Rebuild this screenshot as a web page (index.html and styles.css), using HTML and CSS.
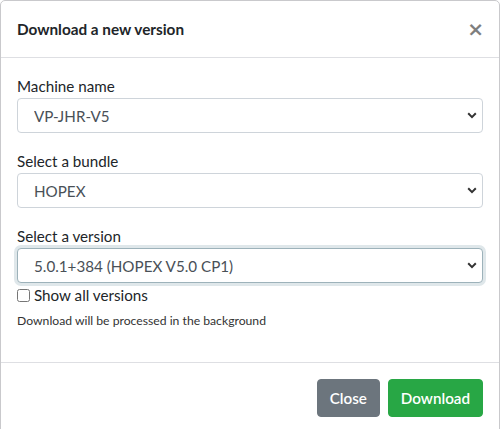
FILE: index.html
```html
<!DOCTYPE html>
<html lang="en">
<head>
<meta charset="utf-8">
<title>Download a new version</title>
<link rel="stylesheet" href="styles.css">
</head>
<body>
<div class="modal">
  <div class="modal-header">
    <h5 class="modal-title">Download a new version</h5>
    <button type="button" class="close" aria-label="Close">×</button>
  </div>
  <div class="modal-body">
    <div class="form-group">
      <label class="label">Machine name</label>
      <select class="select"><option>VP-JHR-V5</option></select>
    </div>
    <div class="form-group">
      <label class="label">Select a bundle</label>
      <select class="select"><option>HOPEX</option></select>
    </div>
    <div class="form-group form-group-last">
      <label class="label">Select a version</label>
      <select class="select select-focus"><option>5.0.1+384 (HOPEX V5.0 CP1)</option></select>
      <label class="check"><input type="checkbox" class="checkbox">Show all versions</label>
      <small class="hint">Download will be processed in the background</small>
    </div>
  </div>
  <div class="modal-footer">
    <button type="button" class="btn btn-secondary">Close</button>
    <button type="button" class="btn btn-success">Download</button>
  </div>
</div>
</body>
</html>
```
FILE: styles.css
```css
html, body {
  margin: 0;
  padding: 0;
  background: #ffffff;
}
body {
  width: 500px;
  height: 429px;
  overflow: hidden;
  font-family: Lato, "Liberation Sans", sans-serif;
  font-size: 15.2px;
  line-height: 24px;
  color: #212529;
}
.modal {
  box-sizing: border-box;
  width: 500px;
  height: 440px;
  border: 1px solid #c9c9cc;
  border-radius: 5px;
  background: #fff;
}
.modal-header {
  box-sizing: border-box;
  height: 57px;
  display: flex;
  align-items: center;
  justify-content: space-between;
  padding: 0 16px;
  border-bottom: 1px solid #dedfe3;
}
.modal-title {
  margin: 0;
  font-size: 15.3px;
  font-weight: 700;
  line-height: 24px;
  color: #212529;
}
.close {
  border: 0;
  background: transparent;
  padding: 0;
  margin: 0 -1px 0 0;
  font-family: "DejaVu Sans", sans-serif;
  font-size: 20px;
  font-weight: 700;
  line-height: 24px;
  color: #000;
  opacity: .5;
}
.modal-body {
  padding: 16px;
}
.form-group {
  display: flex;
  flex-direction: column;
  margin-bottom: 16px;
}
.label {
  display: block;
  line-height: 24px;
}
.select {
  box-sizing: border-box;
  width: 100%;
  height: 35px;
  margin: 0;
  padding: 0 28px 0 16px;
  -webkit-appearance: none;
  appearance: none;
  font-family: Lato, "Liberation Sans", sans-serif;
  font-size: 15.2px;
  color: #495057;
  background-color: #fff;
  background-image: url("data:image/svg+xml,%3Csvg xmlns='http://www.w3.org/2000/svg' width='10' height='7' viewBox='0 0 10 7'%3E%3Cpath d='M1.2 1.3L5 5.1l3.8-3.8' fill='none' stroke='%23333' stroke-width='2'/%3E%3C/svg%3E");
  background-repeat: no-repeat;
  background-position: right 5px center;
  background-size: 10px 7px;
  border: 1px solid #ced4da;
  border-radius: 4px;
  outline: none;
}
.select-focus {
  border-color: #9db2ba;
  box-shadow: 0 0 0 3px #dfe7ea;
}
.check {
  display: flex;
  align-items: center;
  line-height: 24px;
}
.checkbox {
  width: 13px;
  height: 13px;
  margin: 0 4px 0 0;
}
.hint {
  display: block;
  margin-top: 4px;
  font-size: 12.2px;
  line-height: 19px;
  color: #333;
}
.modal-footer {
  display: flex;
  justify-content: flex-end;
  gap: 8px;
  padding: 16px;
  border-top: 1px solid #dedfe3;
}
.btn {
  box-sizing: border-box;
  height: 38px;
  padding: 0 12px;
  border: 1px solid transparent;
  border-radius: 4px;
  font-family: Lato, "Liberation Sans", sans-serif;
  font-size: 15.2px;
  font-weight: 600;
  color: #fff;
}
.btn-secondary {
  background: #6c757d;
  border-color: #6c757d;
}
.btn-success {
  background: #28a745;
  border-color: #28a745;
}
```
